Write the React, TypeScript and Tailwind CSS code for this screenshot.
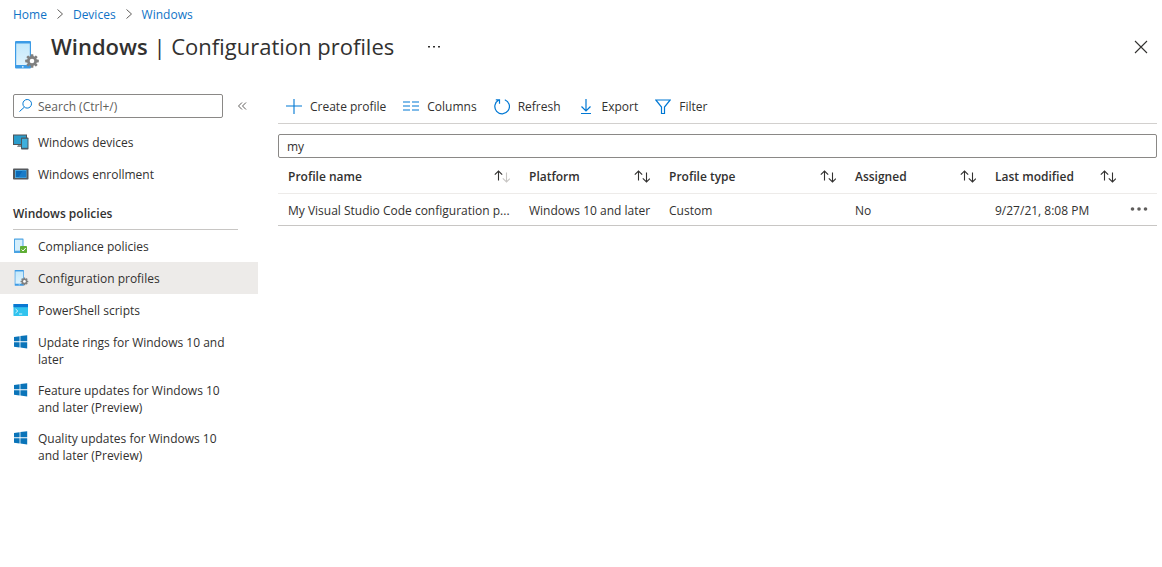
import type { ReactNode } from "react";

const ink = "#323130";

function DeviceGear({ className }: { className: string }) {
  return (
    <svg viewBox="0 0 28 28" className={className} aria-hidden="true">
      <defs>
        <linearGradient id="screen" x1="0" y1="0" x2="0" y2="1">
          <stop offset="0" stopColor="#c3e8fb" />
          <stop offset="1" stopColor="#dff3fd" />
        </linearGradient>
      </defs>
      <rect x="3" y="0" width="16" height="27.5" rx="1" fill="#3c9be6" />
      <rect x="4.2" y="2.5" width="13.6" height="21.5" fill="url(#screen)" />
      <circle cx="10.8" cy="25.8" r="0.9" fill="#d8effc" />
      <g fill="#808080">
        {[0, 45, 90, 135].map((a) => (
          <rect key={a} x="18.6" y="13.2" width="2.8" height="13.6" rx="0.6" transform={`rotate(${a} 20 20)`} />
        ))}
        <circle cx="20" cy="20" r="5" />
      </g>
      <circle cx="20" cy="20" r="2.3" fill="#fff" />
    </svg>
  );
}

function DevicesIcon() {
  return (
    <svg viewBox="0 0 16 16" className="size-4" aria-hidden="true">
      <rect x="0" y="0.5" width="14" height="10.5" fill="#4f5356" />
      <rect x="1" y="1.5" width="12" height="8.5" fill="#2a9ccb" />
      <path d="M4 13l1-2h4v2z" fill="#8b8f92" />
      <rect x="8" y="3.5" width="7.5" height="12" rx="0.8" fill="#4a5963" />
      <rect x="9" y="4.8" width="5.5" height="9" fill="#3fb0dd" />
    </svg>
  );
}

function TabletIcon() {
  return (
    <svg viewBox="0 0 16 16" className="size-4" aria-hidden="true">
      <rect x="0" y="2.5" width="15.5" height="11" rx="0.8" fill="#55585c" />
      <rect x="2" y="4" width="11.5" height="8" fill="#58b4e6" />
      <rect x="2.8" y="4.8" width="9.9" height="6.4" fill="#0a6ab8" />
      <path d="M9.5 4.8h3.2v6.4H5.5z" fill="#1b7cc8" />
    </svg>
  );
}

function ComplianceIcon() {
  return (
    <svg viewBox="0 0 16 16" className="size-4" aria-hidden="true">
      <rect x="1" y="0.5" width="9.5" height="14.5" rx="0.6" fill="#4aa3e3" />
      <rect x="2" y="1.7" width="7.5" height="11" fill="#d4eefb" />
      <rect x="7" y="8" width="7" height="7" rx="0.8" fill="#5fae35" />
      <path d="M8.6 11.5l1.5 1.5 2.6-3" fill="none" stroke="#fff" strokeWidth="1" />
    </svg>
  );
}

function ShellIcon() {
  return (
    <svg viewBox="0 0 16 16" className="size-4" aria-hidden="true">
      <rect x="0.5" y="2" width="14.5" height="12" rx="0.6" fill="#32c3ee" />
      <path d="M0.5 2h14.5v3.2H0.5z" fill="#0a78d2" />
      <path d="M2.5 7l2.3 2-2.3 2M6 12h3.2" fill="none" stroke="#d8f6ff" strokeWidth="1" />
    </svg>
  );
}

function WindowsIcon() {
  return (
    <svg viewBox="0 0 16 16" className="size-4" aria-hidden="true">
      <path
        d="M1 3l5.6-.8v5.1H1zM7.4 2.1L14.2 1.2v6.1H7.4zM1 8.2h5.6v5.2L1 12.7zM7.4 8.2h6.8v6.2l-6.8-.9z"
        fill="#0a74b9"
      />
    </svg>
  );
}

function Stroke({ d, className = "size-4", width = 1 }: { d: string; className?: string; width?: number }) {
  return (
    <svg viewBox="0 0 16 16" className={className} fill="none" stroke="currentColor" strokeWidth={width} aria-hidden="true">
      <path d={d} />
    </svg>
  );
}

function SortIcon({ ascending = false }: { ascending?: boolean }) {
  return (
    <svg viewBox="0 0 16 16" className="size-4 shrink-0" fill="none" stroke={ink} strokeWidth="1.1" aria-hidden="true">
      <path d="M4.5 12.5V3M0.8 6.7l3.7-3.7 3.7 3.7" />
      <path d="M12.5 4.5v9.5M8.8 10.3l3.7 3.7 3.4-3.4" stroke={ascending ? "#c8c6c4" : ink} />
    </svg>
  );
}

function NavItem({ icon, active = false, children }: { icon: ReactNode; active?: boolean; children: ReactNode }) {
  return (
    <li>
      <a
        href="#"
        aria-current={active ? "page" : undefined}
        className={`flex min-h-8 items-start gap-[9px] pt-2 pb-1.5 pr-6 pl-[13px] ${active ? "bg-[#edebe9]" : ""}`}
      >
        <span className="shrink-0">{icon}</span>
        <span>{children}</span>
      </a>
    </li>
  );
}

function Command({ icon, children }: { icon: ReactNode; children: ReactNode }) {
  return (
    <button type="button" className="flex items-center gap-2 whitespace-nowrap">
      <span className="text-[#0078d4]">{icon}</span>
      {children}
    </button>
  );
}

const columns = [
  { label: "Profile name", width: "" },
  { label: "Platform", width: "w-[140px]" },
  { label: "Profile type", width: "w-[186px]" },
  { label: "Assigned", width: "w-[140px]" },
  { label: "Last modified", width: "w-[140px]" },
];

const row = ["My Visual Studio Code configuration p...", "Windows 10 and later", "Custom", "No", "9/27/21, 8:08 PM"];

export default function App() {
  return (
    <div className="min-h-screen bg-white font-['Segoe_UI','Open_Sans',sans-serif] text-xs leading-[17px] text-[#323130]">
      <nav aria-label="Breadcrumb" className="flex h-7 items-center gap-[5px] pl-[13px] text-[#0f73c6]">
        <a href="#">Home</a>
        <Stroke d="M5.5 3.5L10.5 8l-5 4.5" className="size-4 text-[#605e5c]" />
        <a href="#">Devices</a>
        <Stroke d="M5.5 3.5L10.5 8l-5 4.5" className="size-4 text-[#605e5c]" />
        <a href="#">Windows</a>
      </nav>

      <header className="flex h-[62px] items-start pr-3 pl-3">
        <DeviceGear className="mt-[13px] size-7 shrink-0" />
        <h1 className="ml-[11px] text-[22px] leading-9 whitespace-nowrap">
          <span className="font-semibold">Windows</span> | Configuration profiles
        </h1>
        <button type="button" aria-label="More" className="mt-2.5 ml-8">
          <svg viewBox="0 0 16 16" className="size-4" fill={ink} aria-hidden="true">
            <path d="M2 8h2v1.5H2zM7 8h2v1.5H7zM12 8h2v1.5h-2z" />
          </svg>
        </button>
        <button type="button" aria-label="Close" className="mt-[11px] ml-auto pr-[1px]">
          <Stroke d="M2 2l12 12M14 2L2 14" width={1.1} />
        </button>
      </header>

      <div className="flex">
        <aside className="w-[258px] shrink-0">
          <div className="flex items-center gap-3 pt-1 pb-2 pl-[13px]">
            <label className="flex h-6 w-[210px] items-center gap-1 rounded-xs border border-[#8a8886] pl-1">
              <Stroke d="M6.2 9.3L1.5 13.5M13.5 5.8a4.3 4.3 0 1 1-8.6 0 4.3 4.3 0 0 1 8.6 0z" className="size-4 shrink-0 text-[#0078d4]" />
              <input
                aria-label="Search"
                placeholder="Search (Ctrl+/)"
                className="w-full min-w-0 outline-none placeholder:text-[#605e5c]"
              />
            </label>
            <button type="button" aria-label="Collapse menu">
              <Stroke d="M7 4.5L3.5 8 7 11.5M11 4.5L7.5 8l3.5 3.5" className="size-4 text-[#605e5c]" />
            </button>
          </div>
          <ul>
            <NavItem icon={<DevicesIcon />}>Windows devices</NavItem>
            <NavItem icon={<TabletIcon />}>Windows enrollment</NavItem>
          </ul>
          <h2 className="mr-5 ml-[13px] border-b border-[#c8c6c4] pt-[15px] pb-[7px] font-semibold">Windows policies</h2>
          <ul>
            <NavItem icon={<ComplianceIcon />}>Compliance policies</NavItem>
            <NavItem icon={<DeviceGear className="size-4" />} active>
              Configuration profiles
            </NavItem>
            <NavItem icon={<ShellIcon />}>PowerShell scripts</NavItem>
            <NavItem icon={<WindowsIcon />}>Update rings for Windows 10 and later</NavItem>
            <NavItem icon={<WindowsIcon />}>Feature updates for Windows 10 and later (Preview)</NavItem>
            <NavItem icon={<WindowsIcon />}>Quality updates for Windows 10 and later (Preview)</NavItem>
          </ul>
        </aside>

        <main className="min-w-0 flex-1 pr-[5px] pl-5">
          <div className="flex h-[34px] items-center gap-[17px] border-b border-[#d2d0ce] pl-2">
            <Command icon={<Stroke d="M8 0v15M0 7h16" width={1.1} />}>Create profile</Command>
            <Command icon={<Stroke d="M0 3h7M9 3h7M0 7h7M9 7h7M0 11h7M9 11h7" width={1.1} />}>Columns</Command>
            <Command icon={<Stroke d="M10.8 0.7A7.3 7.3 0 1 1 4.8 1M1.8 0.8h3.7v3.9" width={1.2} />}>Refresh</Command>
            <Command icon={<Stroke d="M8 0v12M3.5 7.5L8 12l4.5-4.5M3 14.5h10" width={1.2} />}>Export</Command>
            <Command icon={<Stroke d="M0.8 1h14.4L9.5 8v6.5h-3V8z" width={1.2} />}>Filter</Command>
          </div>
          <input
            aria-label="Search profiles"
            defaultValue="my"
            className="mt-2.5 block h-6 w-full rounded-xs border border-[#8a8886] px-2 outline-none"
          />
          <table className="w-full table-fixed border-collapse text-left">
            <thead>
              <tr className="h-[35px] border-b border-[#edebe9]">
                {columns.map((c, i) => (
                  <th key={c.label} scope="col" className={`pt-0.5 pr-[9px] pl-2.5 font-semibold ${c.width}`}>
                    <button type="button" className="flex w-full items-center justify-between whitespace-nowrap">
                      {c.label}
                      <SortIcon ascending={i === 0} />
                    </button>
                  </th>
                ))}
                <th className="w-8" aria-label="Actions" />
              </tr>
            </thead>
            <tbody>
              <tr className="h-8 border-b border-[#c8c6c4]">
                {row.map((cell) => (
                  <td key={cell} className="truncate pt-0.5 pl-2.5">
                    {cell}
                  </td>
                ))}
                <td>
                  <button type="button" aria-label="Row actions" className="block pl-1">
                    <svg viewBox="0 0 20 16" className="h-4 w-5" fill="#605e5c" aria-hidden="true">
                      <circle cx="3.5" cy="8" r="1.8" />
                      <circle cx="10" cy="8" r="1.8" />
                      <circle cx="16.5" cy="8" r="1.8" />
                    </svg>
                  </button>
                </td>
              </tr>
            </tbody>
          </table>
        </main>
      </div>
    </div>
  );
}
